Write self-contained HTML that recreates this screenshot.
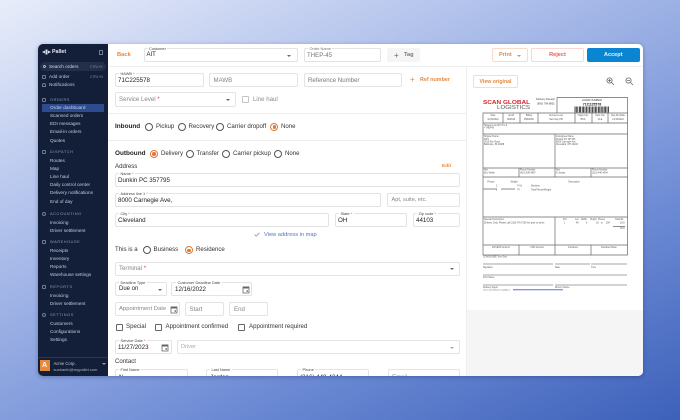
<!DOCTYPE html>
<html><head><meta charset="utf-8"><style>
*{box-sizing:border-box}
html,body{margin:0;padding:0}
body{width:680px;height:420px;overflow:hidden;position:relative;font-family:"Liberation Sans",sans-serif;background:linear-gradient(155deg,#e8edfa 0%,#b3c3ec 30%,#6d8bd5 70%,#3d61ba 100%)}
#card{position:absolute;left:38px;top:44px;width:605px;height:332px;background:#fff;border-radius:5px;overflow:hidden;box-shadow:0 1px 4px rgba(20,40,90,.35);filter:blur(.3px)}
#wrap{position:absolute;left:-38px;top:-44px;width:680px;height:420px}
#wrap div{position:absolute;white-space:nowrap}
#side{left:38px;top:44px;width:70px;height:332px;background:#131f38}
.n{left:50px;font-size:4.7px;color:#c3cbdc;line-height:6px;height:6px}
.h{left:50px;font-size:3.9px;color:#8f9ab0;letter-spacing:.55px;line-height:6px}
.i{left:42px;width:4px;height:4px;border:.7px solid #6f7b93;border-radius:1px}
.f{border:1px solid #e3e3e3;border-radius:2px;background:#fff}
.t{font-size:6.6px;color:#222;line-height:9px}
.p{font-size:6.1px;color:#868686;line-height:9px}
.l{font-size:3.9px;color:#444;background:#fff;line-height:5px;padding:0 1.5px}
.r{width:8.3px;height:8.3px;margin:-.4px;border:.8px solid #555;border-radius:50%;background:#fff}
.o{width:8.3px;height:8.3px;margin:-.4px;border:.9px solid #e07a35;border-radius:50%;background:#fff}
.o:after{content:"";position:absolute;left:1.5px;top:1.5px;width:3.6px;height:3.6px;background:#e07a35;border-radius:50%}
.c{width:7px;height:7px;border:.8px solid #666;border-radius:1px;background:#fff}
.x{font-size:6.1px;color:#333;line-height:8px}
.b{font-size:6.8px;font-weight:bold;color:#222;line-height:8px}
.s{color:#e0483e}
.ar{width:0;height:0;border-left:2px solid transparent;border-right:2px solid transparent;border-top:2px solid #666}
.hr{height:1px;background:#eeeeee}
svg.cal{position:absolute}
</style></head><body>
<div id="card"><div id="wrap">

<div id="side"></div>
<svg style="position:absolute;left:42px;top:49px" width="9" height="6" viewBox="0 0 9 6"><path d="M0 3L3 1.5V4.5ZM9 3L6 1.5V4.5ZM3.5 .5H5.5V5.5H3.5Z" fill="#d8deea"/></svg>
<div style="left:52px;top:49px;font-size:5.3px;font-weight:bold;color:#e6eaf2;line-height:6px">Pallet</div>
<div style="left:99px;top:50px;width:4px;height:4.5px;border:.7px solid #6f7b93"></div>
<div style="left:40px;top:62px;width:66px;height:9px;border-radius:4.5px;background:#232f4a"></div>
<div style="left:43px;top:65px;width:3px;height:3px;border:.6px solid #aab3c6;border-radius:50%"></div>
<div class="n" style="left:49px;top:63.5px;color:#d3d9e5">Search orders</div>
<div style="left:90px;top:63.5px;font-size:3.3px;color:#8490a6;line-height:6px">CTRL+K</div>
<div class="i" style="top:75px"></div><div class="n" style="left:49px;top:73.5px">Add order</div>
<div style="left:90px;top:73.5px;font-size:3.3px;color:#8490a6;line-height:6px">CTRL+N</div>
<div class="i" style="top:83px;border-radius:2px 2px 0 0"></div><div class="n" style="left:49px;top:82px">Notifications</div>

<div class="i" style="top:98px"></div><div class="h" style="top:97px">ORDERS</div>
<div style="left:42px;top:103.5px;width:62px;height:8px;background:#2d4c8f"></div>
<div class="n" style="top:104.5px;color:#c9d3e6">Order dashboard</div>
<div class="n" style="top:113px">Scanned orders</div>
<div class="n" style="top:121px">EDI messages</div>
<div class="n" style="top:129px">Email-in orders</div>
<div class="n" style="top:137.5px">Quotes</div>
<div class="i" style="top:150px"></div><div class="h" style="top:149px">DISPATCH</div>
<div class="n" style="top:157.5px">Routes</div>
<div class="n" style="top:165.5px">Map</div>
<div class="n" style="top:174px">Line haul</div>
<div class="n" style="top:182px">Daily control center</div>
<div class="n" style="top:190px">Delivery notifications</div>
<div class="n" style="top:198.5px">End of day</div>
<div class="i" style="top:212px;border-radius:50%"></div><div class="h" style="top:211px">ACCOUNTING</div>
<div class="n" style="top:219.5px">Invoicing</div>
<div class="n" style="top:227.5px">Driver settlement</div>
<div class="i" style="top:240px"></div><div class="h" style="top:239px">WAREHOUSE</div>
<div class="n" style="top:247.5px">Receipts</div>
<div class="n" style="top:255.5px">Inventory</div>
<div class="n" style="top:263.5px">Reports</div>
<div class="n" style="top:272px">Warehouse settings</div>
<div class="i" style="top:285px"></div><div class="h" style="top:284px">REPORTS</div>
<div class="n" style="top:292.5px">Invoicing</div>
<div class="n" style="top:300.5px">Driver settlement</div>
<div class="i" style="top:313px;border-radius:50%"></div><div class="h" style="top:312px">SETTINGS</div>
<div class="n" style="top:320.5px">Customers</div>
<div class="n" style="top:328.5px">Configurations</div>
<div class="n" style="top:337px">Settings</div>
<div style="left:38px;top:356.5px;width:70px;height:.7px;background:#2b3750"></div>
<div style="left:39.5px;top:360px;width:10px;height:11px;background:#e48a3c;color:#fff;font-size:7px;font-weight:bold;text-align:center;line-height:11px">A</div>
<div style="left:53.5px;top:360.5px;font-size:4.2px;color:#c3cbdc;line-height:5px">Acme Corp.</div>
<div style="left:53.5px;top:366.5px;font-size:4px;color:#a8b2c5;line-height:5px">sushanth@mypallet.com</div>
<div class="ar" style="left:102px;top:362.5px;border-top-color:#8f9ab0"></div>

<div style="left:117px;top:51px;font-size:5.8px;font-weight:bold;color:#e08a45;line-height:8px">Back</div>
<div class="f" style="left:144px;top:48px;width:154px;height:14px"></div>
<div class="l" style="left:147.5px;top:45.5px">Customer</div>
<div class="t" style="left:146.5px;top:50.5px;font-size:6px">AIT</div>
<div class="ar" style="left:287px;top:54.5px"></div>
<div class="f" style="left:304px;top:48px;width:77px;height:14px"></div>
<div class="l" style="left:308px;top:45.5px;color:#777">Order Name</div>
<div class="p" style="left:307px;top:50.5px;color:#777">THEP-45</div>
<div style="left:387px;top:48px;width:33px;height:14px;background:#f5f5f5;border-radius:2px"></div>
<div style="left:394px;top:50.5px;font-size:8px;color:#666;line-height:9px">+</div>
<div style="left:404px;top:51px;font-size:5.6px;font-weight:bold;color:#777;line-height:8px">Tag</div>
<div style="left:492px;top:48px;width:36px;height:14px;border:1px solid #f8dccb;border-radius:2px"></div>
<div style="left:499px;top:51px;font-size:5.6px;font-weight:bold;color:#e08a45;line-height:8px">Print</div>
<div class="ar" style="left:517px;top:54.5px;border-top-color:#e08a45"></div>
<div style="left:531px;top:48px;width:53px;height:14px;border:1px solid #f8d6d6;border-radius:2px"></div>
<div style="left:531px;width:53px;text-align:center;top:51px;font-size:5.6px;font-weight:bold;color:#e45a5a;line-height:8px">Reject</div>
<div style="left:587px;top:48px;width:52.5px;height:14px;background:#0a85d1;border-radius:2px"></div>
<div style="left:587px;width:52.5px;text-align:center;top:51px;font-size:5.6px;font-weight:bold;color:#e8f3fb;line-height:8px">Accept</div>
<div class="hr" style="left:108px;top:66px;width:535px"></div>
<div style="left:466px;top:66px;width:1px;height:310px;background:#eeeeee"></div>

<div class="f" style="left:115px;top:73px;width:89px;height:14px"></div>
<div class="l" style="left:119px;top:70.5px">HAWB <span class="s">*</span></div>
<div class="t" style="left:118px;top:75.5px;font-size:6.2px">71C225578</div>
<div class="f" style="left:209px;top:73px;width:89px;height:14px"></div><div class="p" style="left:213.5px;top:75.5px">MAWB</div>
<div class="f" style="left:304px;top:73px;width:98px;height:14px"></div><div class="p" style="left:308px;top:75.5px;color:#777">Reference Number</div>
<div style="left:410px;top:75px;font-size:8px;color:#e08a45;line-height:9px">+</div>
<div style="left:420px;top:76px;font-size:5.4px;font-weight:bold;color:#e08a45;line-height:8px">Ref number</div>
<div class="f" style="left:115px;top:92px;width:121px;height:14.5px"></div>
<div class="p" style="left:119px;top:95px">Service Level <span class="s">*</span></div>
<div class="ar" style="left:226px;top:98.5px"></div>
<div class="c" style="left:242px;top:96px;border-color:#c4c4c4"></div><div class="x" style="left:253px;top:95.5px;color:#8b8b8b">Line haul</div>
<div class="hr" style="left:108px;top:113px;width:358px"></div>

<div class="b" style="left:115px;top:123px;font-size:6.4px">Inbound</div>
<div class="r" style="left:145.2px;top:123.2px"></div><div class="x" style="left:156px;top:123px">Pickup</div>
<div class="r" style="left:178px;top:123.2px"></div><div class="x" style="left:188.5px;top:123px">Recovery</div>
<div class="r" style="left:216.5px;top:123.2px"></div><div class="x" style="left:227px;top:123px">Carrier dropoff</div>
<div class="o" style="left:270.5px;top:123.2px"></div><div class="x" style="left:281px;top:123px">None</div>
<div class="hr" style="left:108px;top:140px;width:358px"></div>

<div class="b" style="left:115px;top:149.5px;font-size:6.4px">Outbound</div>
<div class="o" style="left:150.2px;top:150px"></div><div class="x" style="left:161px;top:150px">Delivery</div>
<div class="r" style="left:186px;top:150px"></div><div class="x" style="left:196.5px;top:150px">Transfer</div>
<div class="r" style="left:222.5px;top:150px"></div><div class="x" style="left:233px;top:150px">Carrier pickup</div>
<div class="r" style="left:274.5px;top:150px"></div><div class="x" style="left:285px;top:150px">None</div>
<div class="x" style="left:115px;top:163px">Address</div>
<div style="left:442px;top:164px;font-size:4.8px;font-weight:bold;color:#e08a45;line-height:6px">Edit</div>

<div class="f" style="left:115px;top:173px;width:345px;height:14px"></div>
<div class="l" style="left:119px;top:170.5px">Name <span class="s">*</span></div>
<div class="t" style="left:118px;top:175.5px;font-size:6.2px">Dunkin PC 357795</div>
<div class="f" style="left:115px;top:193px;width:266px;height:14px"></div>
<div class="l" style="left:119px;top:190.5px">Address line 1 <span class="s">*</span></div>
<div class="t" style="left:118px;top:195.5px;font-size:6.2px">8000 Carnegie Ave,</div>
<div class="f" style="left:387px;top:193px;width:73px;height:14px"></div><div class="p" style="left:391.5px;top:195.5px;font-size:5.6px">Apt, suite, etc.</div>
<div class="f" style="left:115px;top:213px;width:214px;height:14px"></div>
<div class="l" style="left:119px;top:210.5px">City <span class="s">*</span></div>
<div class="t" style="left:118px;top:215.5px;font-size:6.2px">Cleveland</div>
<div class="f" style="left:335px;top:213px;width:72px;height:14px"></div>
<div class="l" style="left:339px;top:210.5px">State <span class="s">*</span></div>
<div class="t" style="left:338px;top:215.5px;font-size:6.2px">OH</div>
<div class="f" style="left:413px;top:213px;width:47px;height:14px"></div>
<div class="l" style="left:417px;top:210.5px">Zip code <span class="s">*</span></div>
<div class="t" style="left:416px;top:215.5px;font-size:6.2px">44103</div>
<svg style="position:absolute;left:254px;top:232px" width="6" height="5" viewBox="0 0 6 5"><path d="M.5 2.5L2.2 4.2L5.5.8" fill="none" stroke="#888" stroke-width=".7"/></svg>
<div style="left:264px;top:230.5px;font-size:5.7px;color:#5276c4;line-height:8px">View address in map</div>
<div class="x" style="left:115px;top:246px">This is a</div>
<div class="r" style="left:143.2px;top:246.5px"></div><div class="x" style="left:153.5px;top:246px">Business</div>
<div class="o" style="left:185px;top:246.5px"></div><div class="x" style="left:196px;top:246px">Residence</div>

<div class="f" style="left:115px;top:261.5px;width:345px;height:14px"></div>
<div class="p" style="left:119px;top:264px">Terminal <span class="s">*</span></div>
<div class="ar" style="left:450px;top:267.5px"></div>
<div class="f" style="left:115px;top:282px;width:52px;height:14px"></div>
<div class="l" style="left:119px;top:279.5px">Deadline Type</div>
<div class="t" style="left:119px;top:284.5px;font-size:6px">Due on</div>
<div class="ar" style="left:158px;top:288.5px"></div>
<div class="f" style="left:171px;top:282px;width:81px;height:14px"></div>
<div class="l" style="left:176px;top:279.5px">Customer Deadline Date</div>
<div class="t" style="left:175px;top:284.5px;font-size:6.2px">12/16/2022</div>
<svg class="cal" style="left:242px;top:284.5px" width="8" height="9" viewBox="0 0 8 9"><path d="M1 2H7V8H1Z" fill="none" stroke="#666" stroke-width=".8"/><path d="M1 1.5H7V3.5H1Z" fill="#666"/><path d="M4.5 5.2H6V6.8H4.5Z" fill="#666"/></svg>
<div class="f" style="left:115px;top:302px;width:65px;height:14px"></div>
<div class="p" style="left:119px;top:304.5px;font-size:5.9px">Appointment Date</div>
<svg class="cal" style="left:169.5px;top:304.5px" width="8" height="9" viewBox="0 0 8 9"><path d="M1 2H7V8H1Z" fill="none" stroke="#666" stroke-width=".8"/><path d="M1 1.5H7V3.5H1Z" fill="#666"/><path d="M4.5 5.2H6V6.8H4.5Z" fill="#666"/></svg>
<div class="f" style="left:185px;top:302px;width:38.5px;height:14px"></div><div class="p" style="left:189.5px;top:304.5px">Start</div>
<div class="f" style="left:229px;top:302px;width:39px;height:14px"></div><div class="p" style="left:234px;top:304.5px">End</div>
<div class="c" style="left:116px;top:323.5px"></div><div class="x" style="left:126px;top:323px">Special</div>
<div class="c" style="left:154.5px;top:323.5px"></div><div class="x" style="left:165.5px;top:323px">Appointment confirmed</div>
<div class="c" style="left:238px;top:323.5px"></div><div class="x" style="left:249px;top:323px">Appointment required</div>
<div class="f" style="left:115px;top:340px;width:57px;height:14px"></div>
<div class="l" style="left:119px;top:337.5px">Service Date <span class="s">*</span></div>
<div class="t" style="left:118px;top:342.5px;font-size:6.2px">11/27/2023</div>
<svg class="cal" style="left:161px;top:342.5px" width="8" height="9" viewBox="0 0 8 9"><path d="M1 2H7V8H1Z" fill="none" stroke="#666" stroke-width=".8"/><path d="M1 1.5H7V3.5H1Z" fill="#666"/><path d="M4.5 5.2H6V6.8H4.5Z" fill="#666"/></svg>
<div class="f" style="left:177px;top:340px;width:283px;height:14px"></div>
<div class="p" style="left:181px;top:342.5px;font-size:5.6px;color:#aaa">Driver</div>
<div class="ar" style="left:450px;top:346.5px;border-top-color:#aaa"></div>
<div class="x" style="left:115px;top:358px">Contact</div>
<div class="f" style="left:115px;top:369px;width:73px;height:14px"></div>
<div class="l" style="left:119px;top:366.5px">First Name</div>
<div class="t" style="left:119px;top:372.5px;font-size:6.2px">N</div>
<div class="f" style="left:206px;top:369px;width:72px;height:14px"></div>
<div class="l" style="left:210px;top:366.5px">Last Name</div>
<div class="t" style="left:210px;top:372.5px;font-size:6.2px">Jordan</div>
<div class="f" style="left:297px;top:369px;width:72px;height:14px"></div>
<div class="l" style="left:301px;top:366.5px">Phone</div>
<div class="t" style="left:300px;top:372.5px;font-size:6.2px">(216) 440-4244</div>
<div class="f" style="left:388px;top:369px;width:72px;height:14px"></div>
<div class="p" style="left:392px;top:372.5px">Email</div>

<div style="left:473px;top:75px;width:45px;height:13px;border:1px solid #f8dccb;border-radius:2px"></div>
<div style="left:473px;width:45px;text-align:center;top:77.5px;font-size:5.2px;font-weight:bold;color:#e08a45;line-height:8px">View original</div>
<svg style="position:absolute;left:605px;top:76px" width="30" height="10" viewBox="0 0 30 10"><g fill="none" stroke="#666" stroke-width=".8"><circle cx="4.5" cy="4.5" r="2.6"/><path d="M6.5 6.5L9 9M3 4.5H6M4.5 3V6"/><circle cx="23.5" cy="4.5" r="2.6"/><path d="M25.5 6.5L28 9M22 4.5H25"/></g></svg>
<div style="left:467px;top:310px;width:176px;height:66px;background:#f5f5f5"></div>

<svg style="position:absolute;left:0;top:0" width="680" height="420" viewBox="0 0 680 420" font-family="Liberation Sans, sans-serif">
<text x="483" y="104" font-size="5.4" font-weight="bold" fill="#d8262c" textLength="47" lengthAdjust="spacingAndGlyphs">SCAN GLOBAL</text>
<text x="497" y="109" font-size="5.4" fill="#555" textLength="33" lengthAdjust="spacingAndGlyphs">LOGISTICS</text>
<text x="536" y="100" font-size="2.6" fill="#444">Delivery Receipt</text>
<text x="537" y="104.5" font-size="2.6" fill="#444">(800) 799-8851</text>
<g fill="none" stroke="#666" stroke-width=".7">
<path d="M557 97.5H627.5V113M557 97.5V113"/>
<path d="M483 113H627.5V255H483ZM483 123H627.5M483 134H627.5M483 168H627.5M483 177H627.5M483 217H627.5M483 245H627.5"/>
<path d="M503 113V123M520 113V123M538 113V123M575 113V123M592 113V123M608 113V123"/>
<path d="M555 134V177M519 168V177M591 168V177M555 217V255M519 245V255M591 245V255"/>
<path d="M483 264H553M555 264H590M591 264H627M483 275H627M483 285H553M555 285H627" stroke="#888"/>
<path d="M483 189H497M501 189H515"/>
<path d="M613 226.5H625"/>
</g>
<text x="592" y="101" font-size="2.6" fill="#444" text-anchor="middle">HAWB NUMBER</text>
<text x="592" y="105.5" font-size="3.6" font-weight="bold" fill="#222" text-anchor="middle">71C225578</text>
<path d="M575 106.5V112.5M576.3 106.5V112.5M577.8 106.5V112.5M579.4 106.5V112.5M580.6 106.5V112.5M582.2 106.5V112.5M583.6 106.5V112.5M585 106.5V112.5M586.6 106.5V112.5M588 106.5V112.5M589.5 106.5V112.5M591 106.5V112.5M592.4 106.5V112.5M594 106.5V112.5M595.4 106.5V112.5M596.8 106.5V112.5M598.4 106.5V112.5M599.8 106.5V112.5M601.2 106.5V112.5M602.8 106.5V112.5M604.2 106.5V112.5M605.6 106.5V112.5M607 106.5V112.5M608.4 106.5V112.5" stroke="#222" stroke-width=".8"/>
<g font-size="2.3" fill="#555">
<text x="493" y="116" text-anchor="middle">Date</text><text x="493" y="120" text-anchor="middle">11/15/2022</text>
<text x="511" y="116" text-anchor="middle">Acct#</text><text x="511" y="120" text-anchor="middle">N64648</text>
<text x="529" y="116" text-anchor="middle">Billing</text><text x="529" y="120" text-anchor="middle">PREPAID</text>
<text x="556" y="116" text-anchor="middle">Service Level</text><text x="556" y="120" text-anchor="middle">Next Day PM</text>
<text x="583" y="116" text-anchor="middle">Origin City</text><text x="583" y="120" text-anchor="middle">BOS</text>
<text x="600" y="116" text-anchor="middle">Dest City</text><text x="600" y="120" text-anchor="middle">CLE</text>
<text x="618" y="116" text-anchor="middle">Req Del Date</text><text x="618" y="120" text-anchor="middle">12/16/2022</text>
<text x="484" y="126">Shipper's Acct# / Pro #</text><text x="484" y="128.5">• THEP45</text>
<text x="484" y="137">Shipper Name</text><text x="484" y="140">DSS</text><text x="484" y="142.5">3910 Elm Road</text><text x="484" y="145">Baltimore, BI 24668</text>
<text x="556" y="137">Consignee Name</text><text x="556" y="140">Dunkin PC 357795</text><text x="556" y="142.5">8000 Carnegie Ave,</text><text x="556" y="145">Cleveland, OH 44103</text>
<text x="484" y="170.5">Attn</text><text x="484" y="173.5">Eric Welsh</text>
<text x="520" y="170.5">Phone Number</text><text x="520" y="173.5">(410) 639-4567</text>
<text x="556" y="170.5">Attn</text><text x="556" y="173.5">N Jordan</text>
<text x="592" y="170.5">Phone Number</text><text x="592" y="173.5">(216) 440-4244</text>
<text x="491" y="182.5" text-anchor="middle">Pieces</text><text x="514" y="182.5" text-anchor="middle">Weight</text><text x="574" y="182.5" text-anchor="middle">Description</text>
<text x="496" y="186.5">1</text><text x="517" y="186.5">74 lb</text><text x="531" y="186.5">Monitors</text>
<text x="496" y="190.5">1</text><text x="517" y="190.5">74</text><text x="531" y="190.5">Total Pieces/Weight</text>
<text x="484" y="220">Special Instructions</text><text x="484" y="223.5">Delivery Only; Please call (216) 476-7236 hrs prior to arrive</text>
<text x="563" y="220">Pcs</text><text x="575" y="220">Len</text><text x="581" y="220">Width</text><text x="590" y="220">Height</text><text x="598" y="220">Pieces</text><text x="615" y="220">Total Wt</text>
<text x="564" y="223.5">1</text><text x="576" y="223.5">48</text><text x="586" y="223.5">5</text><text x="596" y="223.5">18</text><text x="601" y="223.5">in</text><text x="606" y="223.5">184</text><text x="620" y="223.5">18.8</text><text x="620" y="229">18.8</text>
<text x="501" y="248" text-anchor="middle">EXCESS Amount</text><text x="537" y="248" text-anchor="middle">COD Amount</text><text x="573" y="248" text-anchor="middle">Insurance</text><text x="609" y="248" text-anchor="middle">Declared Value</text>
<text x="483" y="257.5">CONSIGNEE Text Only</text>
<text x="483" y="268">Signature</text><text x="555" y="268">Date</text><text x="591" y="268">Time</text>
<text x="483" y="278">Print Name</text>
<text x="483" y="288">Delivery Agent</text><text x="555" y="288">Driver's Name</text>
<text x="483" y="290.5" font-size="1.8">Terms and Conditions available at</text>
</g>
<path d="M513 289.7H563" stroke="#5a6fd8" stroke-width="1"/>
</svg>
</div></div>
</body></html>
